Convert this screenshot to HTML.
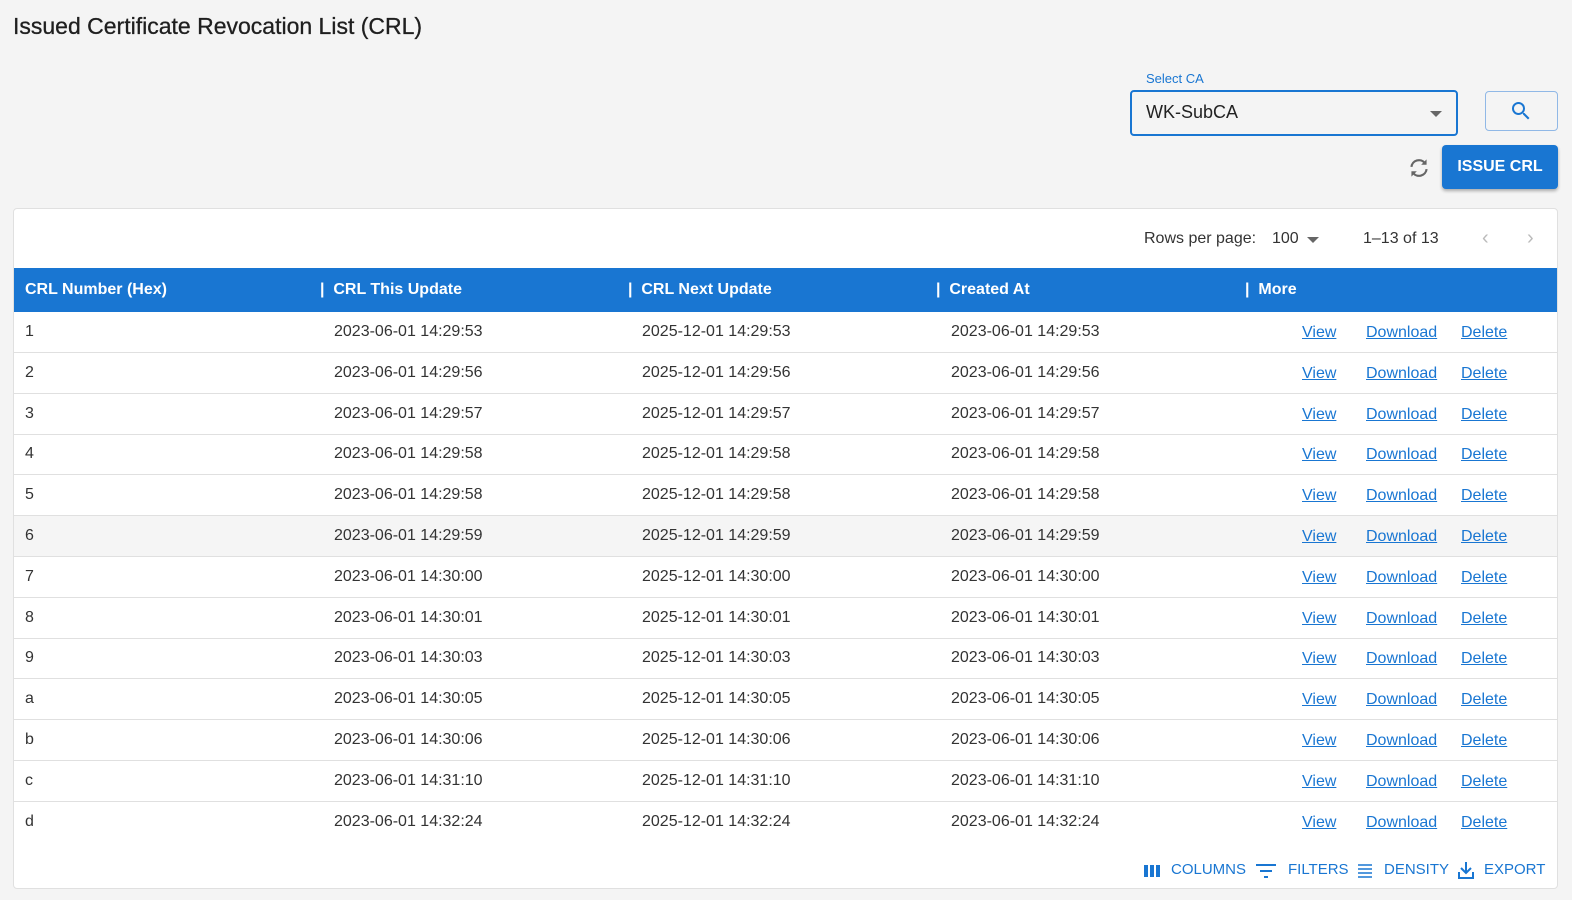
<!DOCTYPE html><html><head><style>
body{margin:0;background:#f4f4f4;font-family:"Liberation Sans",Arial,sans-serif;width:1572px;height:900px;overflow:hidden;position:relative;color:#222}
.a{position:absolute}
h1{position:absolute;left:13px;top:13px;margin:0;font-size:23px;font-weight:normal;color:#1f1f1f;-webkit-text-stroke:0.3px #1f1f1f}
.sel{left:1130px;top:90px;width:324px;height:42px;border:2px solid #1976d2;border-radius:4px}
.card{left:13px;top:208px;width:1543px;height:679px;background:#fff;border:1px solid #e0e0e0;border-radius:4px}
.row{position:absolute;left:0;width:1543px;height:40px;border-bottom:1px solid #e0e0e0;font-size:16px;color:#333}
.row span{position:absolute;top:11px}
.row a{position:absolute;top:12px;color:#1976d2;text-decoration:underline}
.c1{left:11px}.c2{left:320px}.c3{left:628px}.c4{left:937px}
.v{left:1288px}.d{left:1352px}.x{left:1447px}
.hd{left:0;top:59px;width:1543px;height:44px;background:#1976d2;color:#fff;font-weight:bold;font-size:16px}
.hd span{position:absolute;top:13px}
.tb{position:absolute;top:652px;font-size:15px;color:#1976d2}
</style></head><body>
<h1>Issued Certificate Revocation List (CRL)</h1>
<div class="a" style="left:1142px;top:71px;font-size:13px;color:#1976d2;background:#f4f4f4;padding:0 4px">Select CA</div>
<div class="a sel"></div>
<div class="a" style="left:1146px;top:102px;font-size:18px;color:#222">WK-SubCA</div>
<div class="a" style="left:1430px;top:111px;border:6px solid transparent;border-top:6px solid #666;border-bottom:0"></div>
<div class="a" style="left:1485px;top:91px;width:71px;height:38px;border:1px solid #90b8e6;border-radius:4px"></div>
<svg class="a" style="left:1509px;top:99px" width="24" height="24" viewBox="0 0 24 24"><path fill="#1976d2" d="M15.5 14h-.79l-.28-.27A6.47 6.47 0 0016 9.5 6.5 6.5 0 109.5 16c1.61 0 3.09-.59 4.23-1.57l.27.28v.79l5 4.99L20.49 19l-4.99-5zm-6 0C7.01 14 5 11.99 5 9.5S7.01 5 9.5 5 14 7.01 14 9.5 11.99 14 9.5 14z"/></svg>
<svg class="a" style="left:1406px;top:155px" width="26" height="26" viewBox="0 0 24 24"><path fill="none" stroke="#666" stroke-width="2" d="M5 11a7 7 0 0112.5-3.5M19 13a7 7 0 01-12.5 3.5"/><path fill="#666" d="M19 4v5h-5zM5 20v-5h5z"/></svg>
<div class="a" style="left:1442px;top:145px;width:116px;height:44px;background:#1976d2;border-radius:4px;color:#fff;font-weight:bold;font-size:16px;line-height:44px;text-align:center;box-shadow:0 2px 3px rgba(0,0,0,.3)">ISSUE CRL</div>
<div class="a card">
<div class="a" style="left:1130px;top:21px;font-size:16px;color:#333">Rows per page:</div>
<div class="a" style="left:1258px;top:21px;font-size:16px;color:#333">100</div>
<div class="a" style="left:1293px;top:28px;border:6px solid transparent;border-top:6px solid #666;border-bottom:0"></div>
<div class="a" style="left:1349px;top:21px;font-size:16px;color:#333">1–13 of 13</div>
<div class="a" style="left:1468px;top:18px;font-size:20px;color:#bbb">‹</div>
<div class="a" style="left:1513px;top:18px;font-size:20px;color:#bbb">›</div>
<div class="a hd"><span style="left:11px">CRL Number (Hex)</span><span style="left:306px">|&nbsp; CRL This Update</span><span style="left:614px">|&nbsp; CRL Next Update</span><span style="left:922px">|&nbsp; Created At</span><span style="left:1231px">|&nbsp; More</span></div>

<div class="row" style="top:103px"><span class="c1">1</span><span class="c2">2023-06-01 14:29:53</span><span class="c3">2025-12-01 14:29:53</span><span class="c4">2023-06-01 14:29:53</span><a class="v">View</a><a class="d">Download</a><a class="x">Delete</a></div>
<div class="row" style="top:144px"><span class="c1">2</span><span class="c2">2023-06-01 14:29:56</span><span class="c3">2025-12-01 14:29:56</span><span class="c4">2023-06-01 14:29:56</span><a class="v">View</a><a class="d">Download</a><a class="x">Delete</a></div>
<div class="row" style="top:185px"><span class="c1">3</span><span class="c2">2023-06-01 14:29:57</span><span class="c3">2025-12-01 14:29:57</span><span class="c4">2023-06-01 14:29:57</span><a class="v">View</a><a class="d">Download</a><a class="x">Delete</a></div>
<div class="row" style="top:225px"><span class="c1">4</span><span class="c2">2023-06-01 14:29:58</span><span class="c3">2025-12-01 14:29:58</span><span class="c4">2023-06-01 14:29:58</span><a class="v">View</a><a class="d">Download</a><a class="x">Delete</a></div>
<div class="row" style="top:266px"><span class="c1">5</span><span class="c2">2023-06-01 14:29:58</span><span class="c3">2025-12-01 14:29:58</span><span class="c4">2023-06-01 14:29:58</span><a class="v">View</a><a class="d">Download</a><a class="x">Delete</a></div>
<div class="row" style="top:307px;background:#f5f5f5"><span class="c1">6</span><span class="c2">2023-06-01 14:29:59</span><span class="c3">2025-12-01 14:29:59</span><span class="c4">2023-06-01 14:29:59</span><a class="v">View</a><a class="d">Download</a><a class="x">Delete</a></div>
<div class="row" style="top:348px"><span class="c1">7</span><span class="c2">2023-06-01 14:30:00</span><span class="c3">2025-12-01 14:30:00</span><span class="c4">2023-06-01 14:30:00</span><a class="v">View</a><a class="d">Download</a><a class="x">Delete</a></div>
<div class="row" style="top:389px"><span class="c1">8</span><span class="c2">2023-06-01 14:30:01</span><span class="c3">2025-12-01 14:30:01</span><span class="c4">2023-06-01 14:30:01</span><a class="v">View</a><a class="d">Download</a><a class="x">Delete</a></div>
<div class="row" style="top:429px"><span class="c1">9</span><span class="c2">2023-06-01 14:30:03</span><span class="c3">2025-12-01 14:30:03</span><span class="c4">2023-06-01 14:30:03</span><a class="v">View</a><a class="d">Download</a><a class="x">Delete</a></div>
<div class="row" style="top:470px"><span class="c1">a</span><span class="c2">2023-06-01 14:30:05</span><span class="c3">2025-12-01 14:30:05</span><span class="c4">2023-06-01 14:30:05</span><a class="v">View</a><a class="d">Download</a><a class="x">Delete</a></div>
<div class="row" style="top:511px"><span class="c1">b</span><span class="c2">2023-06-01 14:30:06</span><span class="c3">2025-12-01 14:30:06</span><span class="c4">2023-06-01 14:30:06</span><a class="v">View</a><a class="d">Download</a><a class="x">Delete</a></div>
<div class="row" style="top:552px"><span class="c1">c</span><span class="c2">2023-06-01 14:31:10</span><span class="c3">2025-12-01 14:31:10</span><span class="c4">2023-06-01 14:31:10</span><a class="v">View</a><a class="d">Download</a><a class="x">Delete</a></div>
<div class="row" style="top:593px;border-bottom:none"><span class="c1">d</span><span class="c2">2023-06-01 14:32:24</span><span class="c3">2025-12-01 14:32:24</span><span class="c4">2023-06-01 14:32:24</span><a class="v">View</a><a class="d">Download</a><a class="x">Delete</a></div>

<svg class="a" style="left:1129px;top:655px" width="18" height="14"><rect x="1" y="1" width="4" height="12" fill="#1976d2"/><rect x="7" y="1" width="4" height="12" fill="#1976d2"/><rect x="13" y="1" width="4" height="12" fill="#1976d2"/></svg>
<span class="tb" style="left:1157px">COLUMNS</span>
<svg class="a" style="left:1242px;top:653px" width="20" height="18"><path d="M0 3h20M4 9h12M8 15h4" stroke="#1976d2" stroke-width="2"/></svg>
<span class="tb" style="left:1274px">FILTERS</span>
<svg class="a" style="left:1343px;top:654px" width="16" height="16"><path d="M1 2h14M1 6h14M1 10h14M1 14h14" stroke="#1976d2" stroke-width="1.6"/></svg>
<span class="tb" style="left:1370px">DENSITY</span>
<svg class="a" style="left:1443px;top:652px" width="18" height="18"><path d="M9 1v11M4 7l5 5 5-5M2 11v6h14v-6" stroke="#1976d2" stroke-width="2" fill="none"/></svg>
<span class="tb" style="left:1470px">EXPORT</span>
</div>
</body></html>
